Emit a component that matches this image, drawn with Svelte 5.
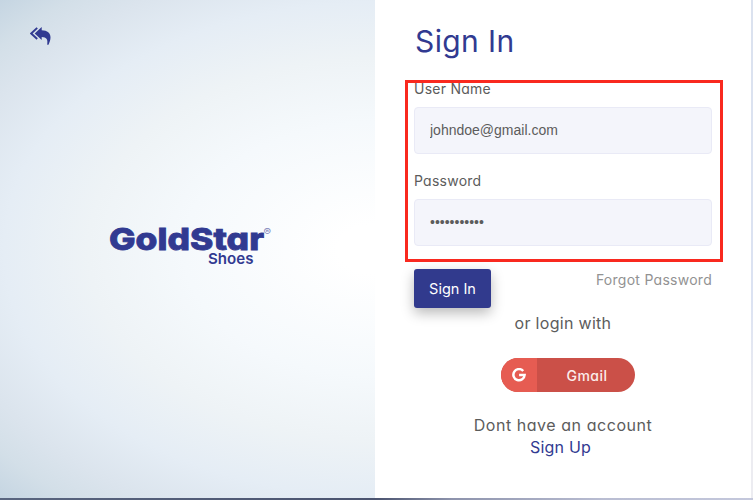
<script>
  let username = $state('johndoe@gmail.com');
  let password = $state('goldstar123');
</script>

<div class="page">
  <div class="card">
    <section class="brand">
      <a class="back" href="#home" aria-label="Back">
        <svg width="21" height="18" viewBox="0 0 21 18" fill="none">
          <path d="M7.2 .9 1.2 6.5 7.2 12" stroke="#313a91" stroke-width="1.9" />
          <path d="M11.7 0v3.2c5.8.2 8.8 3 8.8 7.1 0 2.7-.8 5-2 7.4h-1.3c.8-5.4-.3-7.6-5.5-7.8v3.1L4.7 6.5Z" fill="#313a91" />
        </svg>
      </a>
      <svg class="logo" width="166" height="42" viewBox="0 0 166 42">
        <text class="word" x="1" y="24" textLength="155" lengthAdjust="spacingAndGlyphs">GoldStar</text>
        <text class="mark" x="155.6" y="9" textLength="7.6" lengthAdjust="spacingAndGlyphs">®</text>
        <text class="sub" x="100" y="38" textLength="45.5" lengthAdjust="spacingAndGlyphs">Shoes</text>
      </svg>
    </section>

    <section class="panel">
      <h1>Sign In</h1>
      <form onsubmit={(e) => e.preventDefault()}>
        <div class="fields">
          <label for="user" class="l1">User Name</label>
          <input id="user" type="text" bind:value={username} />
          <label for="pass" class="l2">Password</label>
          <input id="pass" type="password" bind:value={password} />
          <div class="highlight"></div>
        </div>
        <div class="actions">
          <button class="submit">Sign In</button>
          <a class="forgot" href="#forgot">Forgot Password</a>
        </div>
      </form>
      <p class="or">or login with</p>
      <a class="gmail" href="#gmail">
        <span class="g">
          <svg width="14" height="14" viewBox="0 0 14 14" fill="none" stroke="#fff" stroke-width="2.5">
            <path d="M11.2 3A5.6 5.6 0 1 0 12.6 7H7.1" />
          </svg>
        </span>
        <span class="gl">Gmail</span>
      </a>
      <p class="none">Dont have an account</p>
      <a class="signup" href="#signup">Sign Up</a>
    </section>
  </div>
  <div class="base"></div>
</div>

<style>
  :global(body) { margin: 0; }
  * { box-sizing: border-box; }
  .page {
    display: flex;
    flex-direction: column;
    width: 753px;
    height: 500px;
    overflow: hidden;
    font-family: Inter, 'Noto Sans', sans-serif;
    font-feature-settings: 'cv11';
    color: #5c5c5c;
  }
  .card {
    display: flex;
    height: 498px;
    padding-right: 2px;
    background: linear-gradient(#dbe2ef, #dbe2f2 60%, #ececf1 80%);
  }
  .base { height: 2px; background: linear-gradient(90deg, #59657f, #4b5470 50%, #8d93ac 60%, #b9bdd2 80%, #c4c8dc); }
  a { text-decoration: none; }
  .brand {
    width: 375px;
    flex: none;
    display: flex;
    flex-direction: column;
    background: radial-gradient(ellipse farthest-corner at 100% 50%, #fff 0%, #fff 7%, #f5f9fc 36%, #eef3f6 54%, #e5edf5 70%, #dbe4ed 83%, #d3dfe8 91%, #c5d5e2 100%);
  }
  .back { margin: 27px 0 0 30px; height: 18px; width: 21px; line-height: 0; }
  .logo { margin: 181px 0 0 108px; fill: #313a91; overflow: visible; }
  .word { font-size: 30.5px; font-weight: 800; stroke: #313a91; stroke-width: .8; }
  .mark { font-size: 9px; fill: #7c82b8; }
  .sub { font-size: 15px; font-weight: 600; }
  .panel {
    flex: 1;
    display: flex;
    flex-direction: column;
    background: #fff;
    padding: 21px 39px 0 39px;
  }
  h1 { margin: 0 0 0 1px; font-size: 30px; font-weight: 400; line-height: 40px; color: #313a91; letter-spacing: .4px; }
  .fields { position: relative; display: flex; flex-direction: column; margin-top: 18px; }
  label { font-size: 14px; line-height: 20px; letter-spacing: .25px; }
  .l1 { margin-bottom: 8px; }
  .l2 { margin: 17px 0 8px; }
  input {
    height: 47px;
    width: 100%;
    padding: 0 15px 2px;
    border: 1px solid #e9eaf6;
    border-radius: 4px;
    background: #f4f5fb;
    color: #5c5c5c;
    font: 14px 'Liberation Sans', Arial, sans-serif;
    outline: none;
  }
  .highlight {
    position: absolute;
    inset: 1px -11px -16px -9px;
    border: 3px solid #f9291f;
    pointer-events: none;
  }
  .actions { display: flex; justify-content: space-between; margin-top: 23px; height: 41px; }
  .submit {
    width: 77px;
    height: 39px;
    border: 0;
    padding: 0;
    border-radius: 3px;
    background: #313a8d;
    color: #fff;
    font: 14.5px Inter, sans-serif;
    box-shadow: 0 5px 13px rgba(0, 0, 0, .28);
  }
  .forgot { font-size: 14px; line-height: 21px; color: #929292; letter-spacing: .27px; }
  p { margin: 0; text-align: center; }
  .or { margin-top: 2px; font-size: 16px; line-height: 22px; letter-spacing: .3px; }
  .gmail {
    display: flex;
    width: 134px;
    height: 34px;
    margin: 24px 0 0 87px;
    border-radius: 17px;
    overflow: hidden;
    background: #cb5048;
    color: #fbeceb;
    font-size: 14px;
    line-height: 35px;
  }
  .g { width: 36px; background: #e65c52; display: flex; align-items: center; justify-content: center; }
  .gl { flex: 1; text-align: center; font-weight: 500; letter-spacing: .5px; padding-left: 2px; }
  .none { margin-top: 22px; font-size: 16px; line-height: 22px; letter-spacing: .55px; }
  .signup { font-size: 16px; line-height: 22px; color: #313a91; text-align: center; letter-spacing: .2px; padding-right: 5px; }
</style>
